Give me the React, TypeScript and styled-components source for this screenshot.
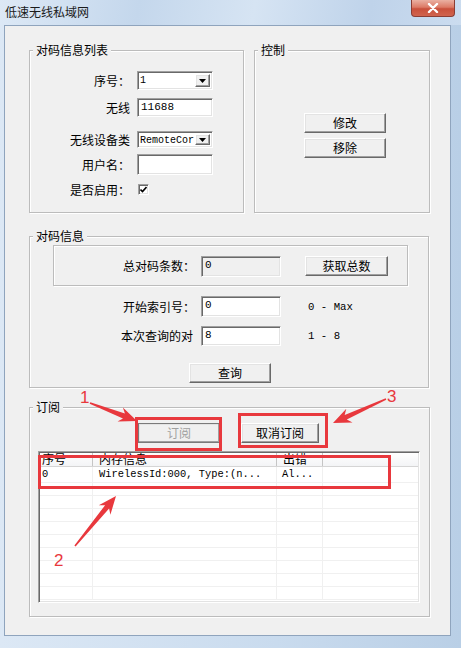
import styled, { createGlobalStyle } from "styled-components"

const UI_FONT = `"Noto Sans CJK SC", "Noto Sans", sans-serif`
const MONO_FONT = `"Liberation Mono", "Noto Sans CJK SC", monospace`
const MARK_RED = "#e8383d"

const GlobalStyle = createGlobalStyle`
  html, body {
    margin: 0;
    padding: 0;
    background: #fff;
  }
  * { box-sizing: border-box; }
  body {
    font-family: ${UI_FONT};
    font-size: 12px;
    color: #000;
  }
`

const Window = styled.div`
  position: relative;
  width: 461px;
  height: 648px;
  overflow: hidden;
  background: linear-gradient(to right, #dce8f5 0%, #c9dbee 60%, #b9cfe6 100%);
`

const TitleBar = styled.div`
  height: 25px;
  display: flex;
  justify-content: space-between;
  align-items: flex-start;
  background: linear-gradient(100deg, #dde9f6 0%, #c4d7ec 30%, #d6e4f3 55%, #bfd3ea 80%, #cbdcef 100%);
`

const Title = styled.span`
  padding-left: 5px;
  line-height: 24px;
  font-size: 12px;
  color: #1b1b1b;
`

const CloseButton = styled.div`
  width: 44px;
  height: 17px;
  margin-right: 6px;
  border: 1px solid #8b3d33;
  border-top: none;
  border-radius: 0 0 4px 4px;
  background: linear-gradient(to bottom, #eab0a2 0%, #dc7a66 45%, #c9503b 55%, #d0644e 100%);
  display: flex;
  align-items: center;
  justify-content: center;
`

/* window client area */
const Client = styled.div`
  margin-left: 4px;
  width: 447px;
  height: 611px;
  border: 1px solid #8fa4bd;
  background: #f0f0f0;
  padding: 24px 0 0 24px;
`

const TopRow = styled.div`
  display: flex;
  gap: 10px;
`

const Group = styled.div<{ $w: number; $h: number; $mt?: number }>`
  width: ${(p) => p.$w}px;
  height: ${(p) => p.$h}px;
  margin-top: ${(p) => p.$mt ?? 0}px;
  border: 1px solid #bcbcbc;
  box-shadow: 1px 1px 0 #fff, inset 1px 1px 0 #fff;
  display: flex;
  flex-direction: column;
  align-items: flex-start;
`

const GroupTitle = styled.div`
  margin: -8px 0 0 3px;
  padding: 0 3px;
  width: fit-content;
  background: #f0f0f0;
  line-height: 14px;
  font-size: 12px;
  white-space: nowrap;
`

const FieldRow = styled.div<{ $mt: number; $h: number; $ml?: number }>`
  display: flex;
  align-items: center;
  margin-top: ${(p) => p.$mt}px;
  margin-left: ${(p) => p.$ml ?? 0}px;
  height: ${(p) => p.$h}px;
`

const FieldLabel = styled.span<{ $w: number; $gap: number }>`
  width: ${(p) => p.$w}px;
  margin-right: ${(p) => p.$gap}px;
  text-align: right;
  line-height: 14px;
  white-space: nowrap;
`

const sunken = `
  border: 1px solid;
  border-color: #a0a0a0 #ffffff #ffffff #a0a0a0;
  box-shadow: inset 1px 1px 0 #696969, inset -1px -1px 0 #e3e3e3;
`

const raised = `
  border: 1px solid;
  border-color: #ffffff #696969 #696969 #ffffff;
  box-shadow: inset -1px -1px 0 #a0a0a0, inset 1px 1px 0 #e3e3e3;
`

const TextBox = styled.div<{ $w: number; $disabled?: boolean }>`
  ${sunken}
  width: ${(p) => p.$w}px;
  height: 100%;
  background: ${(p) => (p.$disabled ? "#f0f0f0" : "#fff")};
  padding: 2px 0 0 3px;
  font-family: ${MONO_FONT};
  font-size: 11px;
  line-height: 13px;
  overflow: hidden;
  white-space: nowrap;
`

const Combo = styled.div<{ $w: number }>`
  ${sunken}
  width: ${(p) => p.$w}px;
  height: 100%;
  background: #fff;
  display: flex;
  padding: 2px;
`

const ComboText = styled.span`
  flex: 1;
  min-width: 0;
  font-family: ${MONO_FONT};
  font-size: 10px;
  line-height: 13px;
  white-space: nowrap;
  overflow: hidden;
`

const ComboButton = styled.span`
  ${raised}
  flex: 0 0 15px;
  background: #f0f0f0;
  display: flex;
  align-items: center;
  justify-content: center;
`

const CheckBox = styled.span`
  ${sunken}
  width: 11px;
  height: 11px;
  background: #fff;
  display: flex;
  align-items: center;
  justify-content: center;
`

const PushButton = styled.button<{ $w: number; $mt?: number; $ml?: number; $dim?: boolean }>`
  ${raised}
  width: ${(p) => p.$w}px;
  height: 20px;
  margin: ${(p) => p.$mt ?? 0}px 0 0 ${(p) => p.$ml ?? 0}px;
  padding: 0;
  background: #f0f0f0;
  font-family: ${UI_FONT};
  font-size: 12px;
  line-height: 14px;
  color: ${(p) => (p.$dim ? "#a0a0a0" : "#000")};
  outline: ${(p) => (p.$dim ? "1px solid #7a7a7a" : "none")};
  outline-offset: -1px;
`

const SubBox = styled.div`
  margin: 2px 0 0 23px;
  width: 355px;
  height: 41px;
  border: 1px solid #bcbcbc;
  box-shadow: 1px 1px 0 #fff, inset 1px 1px 0 #fff;
  display: flex;
  align-items: center;
  padding-top: 1px;
`

const Hint = styled.span`
  margin-left: 27px;
  font-family: ${MONO_FONT};
  font-size: 10.7px;
  white-space: pre;
`

const ButtonRow = styled.div`
  display: flex;
  gap: 21px;
  margin: 9px 0 0 108px;
`

/* list view */
const COLUMNS = "53px 184px 46px 1fr"

const ListView = styled.div`
  ${sunken}
  margin: 8px 0 0 8px;
  width: 382px;
  height: 152px;
  background: #fff;
  padding: 1px;
  overflow: hidden;
`

const ListHeader = styled.div`
  display: grid;
  grid-template-columns: ${COLUMNS};
  height: 14px;
  border-bottom: 1px solid #d5d5d5;
  background: linear-gradient(to bottom, #ffffff, #f3f4f6);
`

const HeaderCell = styled.span<{ $pl: number }>`
  padding-left: ${(p) => p.$pl}px;
  border-right: 1px solid #c5c5c5;
  height: 13px;
  line-height: 12px;
  font-size: 12px;
  white-space: nowrap;
  &:last-child { border-right: none; }
`

const ListRow = styled.div<{ $h: number }>`
  display: grid;
  grid-template-columns: ${COLUMNS};
  height: ${(p) => p.$h}px;
  border-bottom: 1px solid #f0f0f0;
`

const Cell = styled.span<{ $pl: number }>`
  padding-left: ${(p) => p.$pl}px;
  border-right: 1px solid #f0f0f0;
  font-family: ${MONO_FONT};
  font-size: 10.4px;
  line-height: 15px;
  white-space: nowrap;
  overflow: hidden;
  &:last-child { border-right: none; }
`

const Overlay = styled.svg`
  position: absolute;
  left: 0;
  top: 0;
  pointer-events: none;
`

const NumberMark = styled.text`
  font-family: "Liberation Sans", "Noto Sans", sans-serif;
  font-size: 17px;
  fill: ${MARK_RED};
`

const MARK_BOXES = [
  { x: 136.5, y: 418.5, w: 84, h: 31 },
  { x: 239.5, y: 414.5, w: 87, h: 32 },
  { x: 39.5, y: 456.5, w: 350, h: 31 },
]

const ARROWS = [
  { tx: 90, ty: 403, hx: 137, hy: 421 },
  { tx: 386, ty: 399, hx: 333, hy: 423 },
  { tx: 75, ty: 546, hx: 116, hy: 496 },
]

const MARK_NUMBERS = [
  { n: "1", x: 80, y: 403 },
  { n: "3", x: 387, y: 402 },
  { n: "2", x: 54, y: 566 },
]

function arrowPoints(tx: number, ty: number, hx: number, hy: number) {
  const len = Math.hypot(hx - tx, hy - ty)
  const ux = (hx - tx) / len
  const uy = (hy - ty) / len
  const nx = -uy
  const ny = ux
  const neckX = hx - ux * 14
  const neckY = hy - uy * 14
  const wingX = hx - ux * 18
  const wingY = hy - uy * 18
  const pt = (x: number, y: number) => `${x.toFixed(1)},${y.toFixed(1)}`
  return [
    pt(tx + nx * 0.8, ty + ny * 0.8),
    pt(neckX + nx * 2.6, neckY + ny * 2.6),
    pt(wingX + nx * 7.5, wingY + ny * 7.5),
    pt(hx, hy),
    pt(wingX - nx * 7.5, wingY - ny * 7.5),
    pt(neckX - nx * 2.6, neckY - ny * 2.6),
    pt(tx - nx * 0.8, ty - ny * 0.8),
  ].join(" ")
}

function DropArrow() {
  return (
    <svg width="7" height="4" viewBox="0 0 7 4">
      <polygon points="0,0 7,0 3.5,4" fill="#000" />
    </svg>
  )
}

const EMPTY_ROWS = Array.from({ length: 9 }, (_, i) => i)

export default function App() {
  return (
    <>
      <GlobalStyle />
      <Window>
        <TitleBar>
          <Title>低速无线私域网</Title>
          <CloseButton>
            <svg width="12" height="10" viewBox="0 0 12 10">
              <path d="M2 1 L10 9 M10 1 L2 9" stroke="#fff" strokeWidth="2.4" strokeLinecap="round" />
            </svg>
          </CloseButton>
        </TitleBar>

        <Client>
          <TopRow>
            <Group $w={215} $h={163}>
              <GroupTitle>对码信息列表</GroupTitle>
              <FieldRow $mt={14} $h={19}>
                <FieldLabel $w={100} $gap={7}>序号：</FieldLabel>
                <Combo $w={76}>
                  <ComboText>1</ComboText>
                  <ComboButton><DropArrow /></ComboButton>
                </Combo>
              </FieldRow>
              <FieldRow $mt={8} $h={19}>
                <FieldLabel $w={100} $gap={7}>无线</FieldLabel>
                <TextBox $w={76}>11688</TextBox>
              </FieldRow>
              <FieldRow $mt={14} $h={17}>
                <FieldLabel $w={100} $gap={7}>无线设备类</FieldLabel>
                <Combo $w={76}>
                  <ComboText>RemoteCor</ComboText>
                  <ComboButton><DropArrow /></ComboButton>
                </Combo>
              </FieldRow>
              <FieldRow $mt={6} $h={21}>
                <FieldLabel $w={100} $gap={7}>用户名：</FieldLabel>
                <TextBox $w={76} />
              </FieldRow>
              <FieldRow $mt={9} $h={11}>
                <FieldLabel $w={100} $gap={8}>是否启用：</FieldLabel>
                <CheckBox>
                  <svg width="7" height="7" viewBox="0 0 7 7">
                    <path d="M0.5 3.5 L2.5 5.5 L6.5 1" stroke="#000" strokeWidth="1.6" fill="none" />
                  </svg>
                </CheckBox>
              </FieldRow>
            </Group>

            <Group $w={176} $h={163}>
              <GroupTitle>控制</GroupTitle>
              <PushButton $w={82} $mt={56} $ml={49}>修改</PushButton>
              <PushButton $w={82} $mt={5} $ml={49}>移除</PushButton>
            </Group>
          </TopRow>

          <Group $w={400} $h={152} $mt={23}>
            <GroupTitle>对码信息</GroupTitle>
            <SubBox>
              <FieldLabel $w={141} $gap={6}>总对码条数：</FieldLabel>
              <FieldRow $mt={0} $h={21}>
                <TextBox $w={80} $disabled>0</TextBox>
              </FieldRow>
              <PushButton $w={83} $ml={24}>获取总数</PushButton>
            </SubBox>
            <FieldRow $mt={10} $h={21}>
              <FieldLabel $w={165} $gap={6}>开始索引号：</FieldLabel>
              <TextBox $w={80}>0</TextBox>
              <Hint>0 - Max</Hint>
            </FieldRow>
            <FieldRow $mt={9} $h={20}>
              <FieldLabel $w={163} $gap={8}>本次查询的对</FieldLabel>
              <TextBox $w={80}>8</TextBox>
              <Hint>1 - 8</Hint>
            </FieldRow>
            <PushButton $w={82} $mt={17} $ml={159}>查询</PushButton>
          </Group>

          <Group $w={401} $h={210} $mt={19}>
            <GroupTitle>订阅</GroupTitle>
            <ButtonRow>
              <PushButton $w={82} $dim>订阅</PushButton>
              <PushButton $w={78}>取消订阅</PushButton>
            </ButtonRow>
            <ListView>
              <ListHeader>
                <HeaderCell $pl={2}>序号</HeaderCell>
                <HeaderCell $pl={6}>内存信息</HeaderCell>
                <HeaderCell $pl={6}>出错</HeaderCell>
                <HeaderCell $pl={0} />
              </ListHeader>
              <ListRow $h={16}>
                <Cell $pl={2}>0</Cell>
                <Cell $pl={6}>WirelessId:000, Type:(n...</Cell>
                <Cell $pl={5}>Al...</Cell>
                <Cell $pl={0} />
              </ListRow>
              {EMPTY_ROWS.map((i) => (
                <ListRow key={i} $h={13}>
                  <Cell $pl={0} />
                  <Cell $pl={0} />
                  <Cell $pl={0} />
                  <Cell $pl={0} />
                </ListRow>
              ))}
            </ListView>
          </Group>
        </Client>

        <Overlay width="461" height="648" viewBox="0 0 461 648">
          {MARK_BOXES.map((b, i) => (
            <rect key={i} x={b.x} y={b.y} width={b.w} height={b.h} fill="none" stroke={MARK_RED} strokeWidth="3" />
          ))}
          {ARROWS.map((a, i) => (
            <polygon key={i} points={arrowPoints(a.tx, a.ty, a.hx, a.hy)} fill={MARK_RED} />
          ))}
          {MARK_NUMBERS.map((m) => (
            <NumberMark key={m.n} x={m.x} y={m.y}>{m.n}</NumberMark>
          ))}
        </Overlay>
      </Window>
    </>
  )
}
